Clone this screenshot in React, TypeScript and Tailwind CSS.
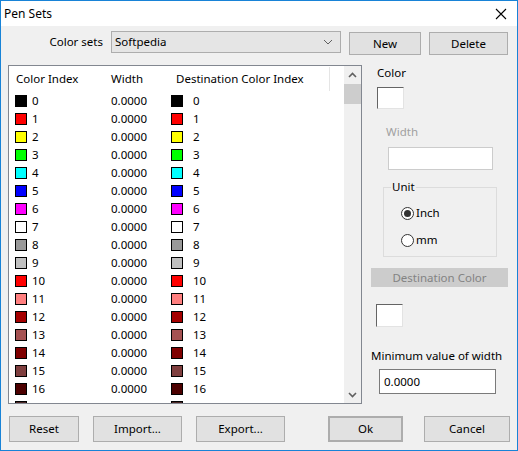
import React from 'react';

const rows: { color: string }[] = [
    { color: '#000000' },
    { color: '#ff0000' },
    { color: '#ffff00' },
    { color: '#00ff00' },
    { color: '#00ffff' },
    { color: '#0000ff' },
    { color: '#ff00ff' },
    { color: '#ffffff' },
    { color: '#999999' },
    { color: '#c0c0c0' },
    { color: '#ff0000' },
    { color: '#ff7f7f' },
    { color: '#a50000' },
    { color: '#a55252' },
    { color: '#7f0000' },
    { color: '#7f3f3f' },
    { color: '#4c0000' },
    { color: '#4c2626' },
];

const Swatch = ({ color }: { color: string }) => (
    <div className="w-[12px] h-[12px] border border-black shrink-0" style={{ backgroundColor: color }} />
);

const Btn = ({ label, className = '' }: { label: string; className?: string }) => (
    <button className={`shrink-0 bg-[#e1e1e1] border border-[#adadad] flex items-center justify-center text-black ${className}`}>
        {label}
    </button>
);

const Radio = ({ checked, label }: { checked?: boolean; label: string }) => (
    <div className="flex items-center h-[18px] ml-[17px]">
        <div className="w-[13px] h-[13px] rounded-full border border-[#333333] bg-white flex items-center justify-center">
            {checked && <div className="w-[7px] h-[7px] rounded-full bg-[#333333]" />}
        </div>
        <span className="ml-[2px]">{label}</span>
    </div>
);

const Chevron = ({ down }: { down?: boolean }) => (
    <svg width="9" height="6" viewBox="0 0 9 6" className={down ? 'rotate-180' : ''}>
        <path d="M1 5 L4.5 1.5 L8 5" fill="none" stroke="#606060" strokeWidth="1.6" />
    </svg>
);

export default function App() {
    return (
        <div
            className="w-[518px] h-[451px] border border-[#1883d7] bg-[#f0f0f0] flex flex-col overflow-hidden text-[11.5px] text-black"
            style={{ fontFamily: '"Segoe UI", "Noto Sans", sans-serif' }}
        >
            {/* Title bar */}
            <div className="h-[25px] bg-white flex items-center shrink-0 text-[12px]">
                <span className="ml-[3px]">Pen Sets</span>
                <svg width="12" height="12" viewBox="0 0 12 12" className="ml-auto mr-[10px]">
                    <path d="M1 1 L11 11 M11 1 L1 11" stroke="#000" strokeWidth="1.1" />
                </svg>
            </div>

            {/* Color sets row */}
            <div className="flex items-start mt-[5px] pl-[7px] h-[24px]">
                <div className="w-[103px] pr-[8px] text-right h-[22px] leading-[22px]">Color sets</div>
                <div className="w-[230px] h-[22px] bg-[#e5e5e5] border border-[#adadad] flex items-center pl-[3px]">
                    <span>Softpedia</span>
                    <svg width="10" height="6" viewBox="0 0 10 6" className="ml-auto mr-[7px]">
                        <path d="M1 1 L5 5 L9 1" fill="none" stroke="#606060" strokeWidth="1" />
                    </svg>
                </div>
                <Btn label="New" className="ml-[8px] mt-[1px] w-[72px] h-[23px]" />
                <Btn label="Delete" className="ml-[8px] mt-[1px] w-[79px] h-[23px]" />
            </div>

            {/* Main area */}
            <div className="flex mt-[10px] pl-[7px]">
                {/* List */}
                <div className="w-[354px] h-[339px] border border-[#828790] bg-white flex overflow-hidden">
                    <div className="flex-1 flex flex-col overflow-hidden">
                        <div className="h-[26px] flex items-center pl-[7px] shrink-0">
                            <div className="w-[95px]">Color Index</div>
                            <div className="w-[65px]">Width</div>
                            <div className="w-[153px]">Destination Color Index</div>
                            <div className="w-px h-[24px] bg-[#e5e5e5]" />
                        </div>
                        {rows.map((r, i) => (
                            <div key={i} className="h-[18px] flex items-center pl-[6px] shrink-0">
                                <Swatch color={r.color} />
                                <div className="ml-[5px] w-[79px]">{i}</div>
                                <div className="w-[60px]">0.0000</div>
                                <Swatch color={r.color} />
                                <div className="ml-[10px]">{i}</div>
                            </div>
                        ))}
                    </div>
                    {/* Scrollbar */}
                    <div className="w-[17px] bg-[#f0f0f0] flex flex-col shrink-0">
                        <div className="h-[17px] flex items-center justify-center">
                            <Chevron />
                        </div>
                        <div className="h-[20px] bg-[#cdcdcd] mt-px" />
                        <div className="flex-1" />
                        <div className="h-[17px] flex items-center justify-center">
                            <Chevron down />
                        </div>
                    </div>
                </div>

                {/* Right panel */}
                <div className="ml-[8px] w-[138px] flex flex-col">
                    <div className="ml-[7px] h-[16px] leading-[16px]">Color</div>
                    <div className="ml-[7px] mt-[6px] w-[27px] h-[22px] bg-white border-t border-l border-[#646464] border-r-[#e3e3e3] border-b-[#e3e3e3] border-r border-b" />
                    <div className="ml-[16px] mt-[15px] h-[16px] leading-[16px] text-[#a0a0a0]">Width</div>
                    <div className="ml-[18px] mt-[7px] w-[105px] h-[23px] bg-white border border-[#cccccc]" />
                    <fieldset className="ml-[13px] mt-[9px] w-[114px] h-[78px] border border-[#dcdcdc]">
                        <legend className="ml-[7px] px-[1px] leading-[16px]">Unit</legend>
                        <div className="mt-[9px] flex flex-col gap-[9px]">
                            <Radio checked label="Inch" />
                            <Radio label="mm" />
                        </div>
                    </fieldset>
                    <div className="ml-[1px] mt-[11px] w-[137px] h-[19px] bg-[#cccccc] text-[#838383] flex items-center justify-center">
                        Destination Color
                    </div>
                    <div className="ml-[6px] mt-[17px] w-[27px] h-[23px] bg-white border-t border-l border-[#646464] border-r-[#e3e3e3] border-b-[#e3e3e3] border-r border-b" />
                    <div className="ml-[1px] mt-[21px] h-[16px] leading-[16px] whitespace-nowrap">Minimum value of width</div>
                    <div className="ml-[9px] mt-[5px] w-[117px] h-[25px] bg-white border border-[#7a7a7a] flex items-center pl-[4px]">
                        0.0000
                    </div>
                </div>
            </div>

            {/* Bottom buttons */}
            <div className="flex mt-[12px] pl-[8px]">
                <Btn label="Reset" className="w-[70px] h-[26px]" />
                <Btn label="Import..." className="ml-[14px] w-[89px] h-[26px]" />
                <Btn label="Export..." className="ml-[14px] w-[89px] h-[26px]" />
                <Btn label="Ok" className="ml-[43px] w-[75px] h-[26px] border-2 border-[#0078d7]" />
                <Btn label="Cancel" className="ml-[21px] w-[86px] h-[26px]" />
            </div>
        </div>
    );
}
